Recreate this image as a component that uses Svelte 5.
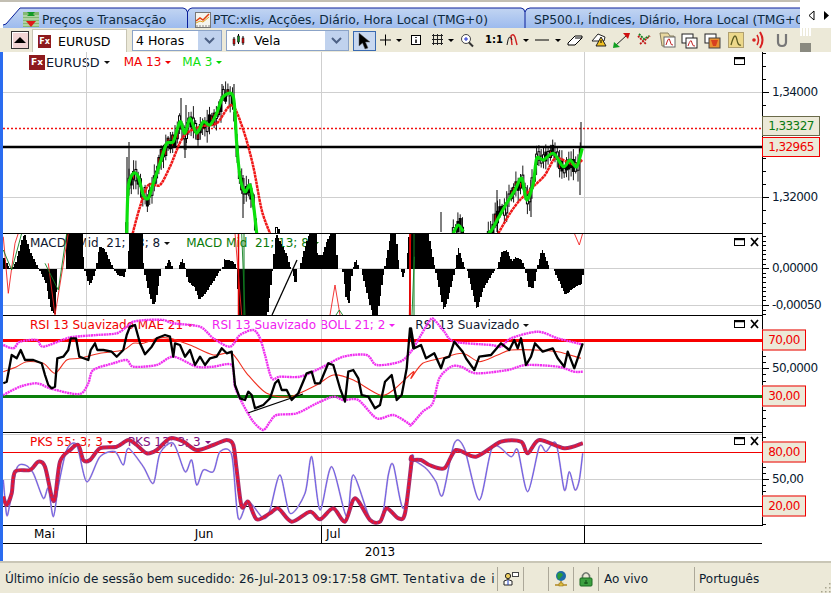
<script>
  const parse = (s, ox, oy) => s.trim().split(/\s+/).map(p => { const [a, b] = p.split(',').map(Number); return [a / 3 + ox, b / 3 + oy]; });
  const str = (a) => a.map(p => p[0].toFixed(1) + ',' + p[1].toFixed(1)).join(' ');
  const smooth = (a) => {
    let d = `M${a[0][0].toFixed(1)} ${a[0][1].toFixed(1)}`;
    for (let i = 0; i < a.length - 1; i++) {
      const p0 = a[Math.max(i - 1, 0)], p1 = a[i], p2 = a[i + 1], p3 = a[Math.min(i + 2, a.length - 1)];
      const k = 0.14;
      d += ` C${(p1[0] + (p2[0] - p0[0]) * k).toFixed(1)} ${(p1[1] + (p2[1] - p0[1]) * k).toFixed(1)} ${(p2[0] - (p3[0] - p1[0]) * k).toFixed(1)} ${(p2[1] - (p3[1] - p1[1]) * k).toFixed(1)} ${p2[0].toFixed(1)} ${p2[1].toFixed(1)}`;
    }
    return d;
  };
  const L = (s, t = 230) => parse(s, 0, t);
  const R = (s, t = 230) => parse(s, 411, t);

  const greenA = parse('380,490 385,350 400,310 415,320 430,375 445,385 460,340 480,280 500,220 520,215 540,155 555,190 570,145 590,190 610,155 630,165 650,130 670,80 700,80 710,220 720,320 735,365 750,345 760,400 770,490', 0, 70);
  const greenB = parse('100,400 115,375 130,395', 420, 100);
  const greenC = parse('205,400 215,390 240,345 260,310 285,270 305,235 320,300 340,250 350,175 370,180 400,160 430,200 450,180 470,200 487,145', 420, 100);
  const redA = parse('398,490 420,410 445,345 480,345 510,290 550,200 600,170 650,160 695,105 730,180 760,290 785,420 810,490', 0, 70);
  const redC = parse('235,400 270,340 300,300 340,260 375,225 405,175 440,185 465,195 487,180', 420, 100);

  let seed = 7;
  const rnd = () => { seed = (seed * 16807) % 2147483647; return seed / 2147483647; };
  const at = (line, x) => {
    if (x <= line[0][0]) return line[0][1];
    for (let i = 1; i < line.length; i++) if (x <= line[i][0]) {
      const [a, b] = line[i - 1], [c, d] = line[i];
      return b + (d - b) * (x - a) / Math.max(c - a, 0.01);
    }
    return line[line.length - 1][1];
  };
  const candles = [];
  for (const line of [greenA, greenB, greenC]) {
    for (let x = line[0][0]; x < line[line.length - 1][0]; x += 2.3) {
      const c = at(line, x) + (rnd() - 0.5) * 10, h = 4 + rnd() * 8;
      candles.push({ x, y: c - h / 2, h, up: h + 2 + rnd() * 10, dn: h + 2 + rnd() * 10, f: rnd() < 0.25 ? '#e01010' : rnd() < 0.5 ? '#000' : '#fff' });
    }
  }
  const spikes = [[127,157,235],[129,142,190],[181,98,130],[186,105,150],[234,84,100],[222,84,100],[243,175,218],[185,130,158],[581,122,150],[580,150,195],[531,180,217],[497,190,232],[441,212,232]];
  const spikeLines = spikes.map(s => ({ x: s[0], a: s[1], b: s[2] }));

  const macdPts = [...L('10,85 30,120 45,95 60,40 70,10 75,25 90,70 115,118 135,160 150,240 165,255 168,118 195,118 198,10 243,10 250,118 265,165 275,150 285,118 295,50 310,55 335,110 340,118 350,135 370,140 375,118 380,118 385,10 425,10 428,118 445,190 455,225 465,215 480,118 490,118 505,88 518,118 530,118 545,85 555,118 560,155 580,170 595,210 610,195 640,150 660,118 665,118 670,88 700,95 708,118 715,255 800,255 815,118 820,60 825,10 860,80 870,118 875,118 880,155 890,155 890,118 895,118 910,60 925,10 945,10 950,75 965,75 975,40 990,10 1005,10 1010,118 1025,118 1035,200 1045,220 1055,118 1065,85 1075,118 1080,118 1115,255 1130,255 1150,118 1170,10 1185,10 1195,118 1200,118 1205,145 1215,118 1225,10 1233,10'),
    ...R('50,10 70,118 95,240 105,220 130,118 138,50 160,118 165,118 195,240 215,175 245,125 250,118 255,118 270,65 285,60 300,95 310,80 330,90 340,118 350,170 365,175 375,118 390,55 415,118 425,118 460,195 480,178 510,160 515,118')];
  let macdD = '';
  for (let x = 3; x < 583; x += 1.5) {
    const y = at(macdPts, x);
    macdD += `M${x.toFixed(1)} 269V${y.toFixed(1)}H${(x + 1.5).toFixed(1)}V269Z `;
  }
  const macdRed = [
    L('10,20 25,190 45,40 55,10'), L('145,100 165,255 205,10'), L('705,10 725,255'), L('990,255 1005,165 1020,255'), L('1232,10 1228,255'),
    R('490,10 505,45 515,10')
  ];
  const macdGreen = [ L('10,60 35,120 65,10'), L('135,100 175,180 200,10'), L('725,10 735,255'), L('1008,255 1018,240 1028,255'), R('10,80 3,255') ];

  const rsiBlack = [...L('10,205 20,200 35,120 50,130 62,105 75,135 100,135 125,145 135,180 145,210 155,220 165,215 172,130 190,125 205,105 212,70 228,70 238,125 265,135 272,105 285,85 292,105 310,105 335,110 350,125 370,105 380,60 390,35 405,30 420,85 435,118 455,95 470,70 495,60 510,65 520,125 525,85 540,90 555,125 570,105 585,150 600,125 615,150 630,130 650,125 665,100 680,115 695,110 705,210 720,250 735,255 745,230 755,240 765,280 790,270 810,250 825,205 835,195 845,225 860,225 875,255 895,235 920,175 935,170 945,205 960,205 985,145 1000,150 1020,220 1035,260 1045,170 1060,165 1075,190 1085,240 1105,245 1125,280 1140,270 1155,200 1175,180 1190,255 1205,240 1220,160 1230,40 1240,100', 315), ...R('0,40 10,100 30,90 45,130 70,115 90,160 100,130 115,125 130,80 155,110 165,130 190,165 205,125 240,120 270,85 295,105 310,75 320,100 330,70 345,150 360,125 372,85 395,110 425,100 440,130 460,155 470,110 490,160 500,130 515,85', 315)];
  const rsiUp = [...L('10,90 40,100 60,80 110,75 130,95 200,70 225,65 290,60 350,55 380,35 400,20 440,15 490,15 520,25 600,35 640,70 690,95 720,60 760,45 780,70 795,120 815,190 840,185 900,185 960,160 1030,125 1100,120 1130,150 1200,140', 315), ...R('0,110 30,60 60,12 75,20 100,50 130,80 240,90 270,95 300,70 380,50 440,70 500,85 515,90', 315)];
  const rsiLow = [...L('10,240 60,215 110,205 150,220 210,235 245,235 265,205 280,165 340,145 380,135 400,155 470,150 520,125 590,155 640,155 695,150 705,215 730,270 760,320 790,345 810,320 830,300 890,295 950,265 1000,245 1030,255 1075,255 1130,310 1180,300 1225,325', 315), ...R('0,330 35,290 65,265 85,190 120,155 150,155 195,175 290,165 345,150 440,155 490,170 515,170', 315)];
  const rsiEma = [...L('10,170 50,155 80,140 130,145 165,175 200,135 240,130 300,115 370,105 400,85 430,85 470,70 510,70 570,90 640,120 695,115 740,175 800,235 870,245 950,210 1000,180 1060,195 1140,240 1180,225 1240,170', 315), ...R('0,190 35,145 90,130 155,115 205,140 260,120 300,105 370,105 440,110 510,130', 315)];

  const pksThick = [...L('10,200 20,225 35,190 45,125 90,120 115,95 135,110 155,200 165,205 180,95 210,60 235,45 250,90 270,90 300,55 350,50 385,30 410,45 440,70 470,60 510,25 550,35 590,60 640,45 680,30 700,45 710,120 725,230 745,215 770,268 810,250 835,235 875,275 930,245 960,268 1000,235 1035,275 1065,205 1110,270 1140,275 1160,235 1195,265 1215,250 1235,90', 430), ...R('0,90 30,90 55,105 100,115 135,60 195,80 270,35 330,35 350,70 385,30 460,55 515,40', 430)];
  const pksThin = [...L('10,150 20,255 30,220 50,115 75,105 100,130 130,205 145,175 160,260 175,170 200,60 230,45 260,155 300,80 345,65 370,105 385,55 430,110 460,160 480,70 520,40 555,125 575,90 590,165 610,120 640,125 660,65 695,75 715,265 745,215 790,265 810,240 840,135 870,250 915,190 935,80 960,240 995,110 1040,260 1060,135 1110,265 1145,265 1165,135 1180,105 1210,235 1240,85', 430), ...R('0,85 45,115 75,155 95,195 130,40 160,55 205,210 245,50 300,80 320,60 350,185 385,50 405,65 435,40 460,180 475,125 492,180 505,150 515,70', 430)];

  const range = (a, b, s) => { const o = []; for (let v = a; v < b; v += s) o.push(v); return o; };
  const grid = [86, 321, 584];
  const panes = [
    { t: 52, h: 181 }, { t: 234, h: 81 }, { t: 316, h: 116 }, { t: 433, h: 92 }
  ];
  const vb = (p) => `3 ${p.t} 759 ${p.h}`;
  const ticks = (p, list) => list.map(y => ({ y: y - p.t }));
  const t0 = ticks(panes[0], range(53, 233, 13.1));
  const t1 = ticks(panes[1], range(236, 315, 4.6));
  const t2 = ticks(panes[2], [356, 362, 374, 381, 410, 418, 426]);
  const t3 = ticks(panes[3], [437, 467, 473, 479, 485, 491, 524]);
  const top = (p, y) => `top:${y - p.t}px`;
</script>

<div class="app">
  <div class="tabs">
    <svg class="tabshape" viewBox="0 0 800 28" aria-hidden="true">
      <defs>
        <linearGradient id="tg" x1="0" y1="0" x2="0" y2="1"><stop offset="0" stop-color="#c2d5f2"/><stop offset="1" stop-color="#9dbbee"/></linearGradient>
      </defs>
      <path d="M3 25 L6 24 L20 8 H183 Q187 8 188 11 V28 H3 Z" fill="url(#tg)"/>
      <path d="M188 28 V11 Q189 8 192 8 H521 Q525 8 525 11 V28 Z" fill="url(#tg)"/>
      <path d="M525 28 V11 Q526 8 530 8 H800 V28 Z" fill="url(#tg)"/>
      <path d="M3 25 L6 24 L20 8 H183 Q186 8 187.500 12 V28 M187.500 12 Q189 8 192 8 H521 Q524 8 525 12 V28 M525 12 Q526 8 530 8 H800" fill="none" stroke="#0a1f9a" stroke-width="1"/>
    </svg>
    <div class="tab t1">
      <svg width="17" height="17" viewBox="0 0 17 17" aria-hidden="true"><rect x="0" y="1" width="16" height="15" fill="#84b874"/><path d="M0 5H16M0 8H16M0 11H16M0 14H16" stroke="#dcecd0"/><path d="M4 1 H12 L8 5Z M8 1 L12 5 H4Z" fill="#129a26"/><path d="M8 16 L13 10 H3Z" fill="#e01818"/></svg>
      <span>Preços e Transacção</span>
    </div>
    <div class="tab t2">
      <svg width="16" height="16" viewBox="0 0 16 16" aria-hidden="true"><rect x=".5" y=".5" width="15" height="15" fill="#f4f4ee" stroke="#777"/><path d="M1 9 L5 6 L8 8 L14 2" fill="none" stroke="#e04010" stroke-width="1.500"/><path d="M1 11 L5 9 L8 10 L14 5" fill="none" stroke="#e0a020"/><path d="M2 13V15M5 13V15M8 13V15M11 13V15M14 13V15" stroke="#888"/></svg>
      <span>PTC:xlis, Acções, Diário, Hora Local (TMG+0)</span>
    </div>
    <div class="tab t3">
      <svg width="16" height="16" viewBox="0 0 16 16" aria-hidden="true"><rect x=".5" y=".5" width="15" height="15" fill="#f4f4ee" stroke="#777"/><path d="M1 9 L5 6 L8 8 L14 2" fill="none" stroke="#e04010" stroke-width="1.500"/><path d="M1 11 L5 9 L8 10 L14 5" fill="none" stroke="#e0a020"/><path d="M2 13V15M5 13V15M8 13V15M11 13V15M14 13V15" stroke="#888"/></svg>
      <span>SP500.I, Índices, Diário, Hora Local (TMG+0)</span>
    </div>
    <div class="scroll">
      <svg width="31" height="28" viewBox="0 0 31 28" aria-hidden="true"><path d="M14 11 L9 15.500 L14 20Z" fill="none" stroke="#000"/><path d="M24 11 L29 15.500 L24 20Z" fill="#000"/></svg>
    </div>
  </div>

  <div class="toolbar">
    <button class="collapse" aria-label="recolher"><i></i></button>
    <div class="symtab"><span class="fx">Fx</span><span>EURUSD</span></div>
    <div class="combo c1"><span>4 Horas</span><b class="arrow"><svg width="11" height="7" viewBox="0 0 11 7" aria-hidden="true"><path d="M1 1 L5.500 5.500 L10 1" fill="none" stroke="#4d6185" stroke-width="2"/></svg></b></div>
    <div class="combo c2">
      <svg width="13" height="14" viewBox="0 0 13 14" aria-hidden="true"><path d="M2 3V12M6.500 0V10M11 2V11" stroke="#000"/><rect x="1" y="5" width="2" height="5" fill="#e01010" stroke="#000" stroke-width=".5"/><rect x="5.500" y="2" width="2" height="6" fill="#109020" stroke="#000" stroke-width=".5"/><rect x="10" y="4" width="2" height="5" fill="#e01010" stroke="#000" stroke-width=".5"/></svg>
      <span>Vela</span><b class="arrow"><svg width="11" height="7" viewBox="0 0 11 7" aria-hidden="true"><path d="M1 1 L5.500 5.500 L10 1" fill="none" stroke="#4d6185" stroke-width="2"/></svg></b>
    </div>
    <div class="tool sel"><svg width="16" height="18" viewBox="0 0 16 18" aria-hidden="true"><path d="M2 1 V14 L5.500 11 L8 17 L11 16 L8.500 10 H13 Z" fill="#000" stroke="#666" stroke-width=".5"/></svg></div>
    <svg class="tools" width="447" height="24" viewBox="377 28 447 24" aria-hidden="true">
      <path d="M380 40H391M385.500 34.500V45.500" stroke="#000"/>
      <path d="M396 39H402L399 42Z" fill="#000"/>
      <rect x="411.500" y="35.500" width="9" height="9" fill="#fff" stroke="#000"/><path d="M416 37V38M416 39.500V43" stroke="#000" stroke-width="1.500"/>
      <path d="M432 35.500H443M432 39.500H443M432 43.500H443M433.500 34V45M437.500 34V45M441.500 34V45" stroke="#222"/>
      <path d="M448 39H454L451 42Z" fill="#000"/>
      <circle cx="466" cy="39" r="4.500" fill="#fff" stroke="#444"/><path d="M469 42.500L473 46.500" stroke="#333" stroke-width="2"/><path d="M464 39H468M466 37V41" stroke="#2030d0"/>
      <path d="M512 45 L511 36 Q513 33 515 37 L517 45" fill="none" stroke="#d02020" stroke-width="1.400"/><path d="M507 45 Q509 32 512 40" fill="none" stroke="#202020"/>
      <path d="M523 39H529L526 42Z" fill="#000"/>
      <path d="M535 40H549" stroke="#000"/>
      <path d="M555 39H561L558 42Z" fill="#000"/>
      <path d="M568 43 L575 36 H582 V38 L575 45 H568 Z M575 38 H582" fill="#fff" stroke="#000"/>
      <path d="M592 41 L598 34 L605 37 L604 41Z" fill="#fff" stroke="#222"/><path d="M601 37 L606 46 H596Z" fill="#f0c020" stroke="#222"/><path d="M601 40V43" stroke="#000"/>
      <path d="M615 46 L627 35" stroke="#222"/><path d="M614 42 L620 47 L613 48Z" fill="#10a020"/><path d="M623 33 L630 33 L628 39Z" fill="#d01010"/>
      <path d="M638 36 L646 44 M640 44 L650 36" stroke="#c01818" stroke-width="1.800" stroke-dasharray="2 1"/><path d="M639 34 L644 39 L649 36" stroke="#108020" stroke-width="1.800" fill="none" stroke-dasharray="2 1"/>
      <path d="M660 33 H668 L670 36 H674 V46 H662 Z" fill="#e8d8a0" stroke="#8a8060"/><rect x="664" y="37" width="11" height="10" fill="#fff" stroke="#666"/><path d="M666 45 Q669 35 670 41 Q671 46 673 45" fill="none" stroke="#c02020"/>
      <rect x="682" y="34" width="11" height="9" fill="#fff" stroke="#222"/><rect x="686" y="38" width="11" height="10" fill="#fff" stroke="#222"/><path d="M688 46 Q691 37 692 43 Q693 47 695 46" fill="none" stroke="#c02020"/>
      <rect x="705" y="34" width="11" height="9" fill="#fff" stroke="#222"/><rect x="709" y="38" width="11" height="10" fill="#e89030" stroke="#444"/><path d="M711 40 H718 L716 46 H713Z" fill="#d84020"/>
      <rect x="728.500" y="32.500" width="15" height="15" fill="#ecd88a" stroke="#b0a070"/><path d="M731 45 Q735 30 737 40 Q738 46 741 45" fill="none" stroke="#5a5a20" stroke-width="1.300"/>
      <circle cx="754" cy="40" r="1.800" fill="#d82020"/><path d="M757 35 Q760 40 757 45" fill="none" stroke="#d82020" stroke-width="1.500"/><path d="M760 32 Q765 40 760 48" fill="none" stroke="#d82020" stroke-width="2"/>
      <path d="M778 34 V42 Q778 46 782 46 Q786 46 786 42 V34" fill="none" stroke="#777" stroke-width="2.200"/>
    </svg>
    <span class="one">1:1</span>
    <div class="chev" aria-hidden="true"></div>
  </div>

  <div class="chart">
    <div class="pane" style="height:181px">
      <div class="plot">
        <div class="legend l-main"><span class="fx big">Fx</span><span class="k wide">EURUSD</span><u></u><span class="r g1">MA 13</span><u class="ur"></u><span class="l g2">MA 3</span><u class="ul"></u></div>
        <svg viewBox={vb(panes[0])} aria-hidden="true">
          <path d="M3 92.500H762M3 197.500H762" stroke="#cfcfcf"/>
          {#each grid as x}<path d={`M${x + .5} 52V233`} stroke="#cfcfcf"/>{/each}
          <path d="M3 128.500H762" stroke="#f01010" stroke-width="1.500" stroke-dasharray="2 2"/>
          <path d="M3 147H762" stroke="#000" stroke-width="2.500"/>
          {#each spikeLines as s}<path d={`M${s.x} ${s.a}V${s.b}`} stroke="#000"/>{/each}
          {#each candles as c}
            <path d={`M${c.x.toFixed(1)} ${(c.y - (c.up - c.h)).toFixed(1)}V${(c.y + c.dn).toFixed(1)}`} stroke="#000" stroke-width=".9"/>
            <rect x={c.x - 1} y={c.y} width="2" height={c.h} fill={c.f} stroke="#000" stroke-width="1"/>
          {/each}
          <rect x="275.500" y="227.500" width="2" height="6" fill="#fff" stroke="#000"/><rect x="278" y="229" width="2" height="5" fill="#000"/>
          <path d={smooth(redA)} class="ln" stroke="#f01818" stroke-width="2.500" stroke-dasharray="3 .5"/>
          <path d={smooth(redC)} class="ln" stroke="#f01818" stroke-width="2.500" stroke-dasharray="3 .5"/>
          <path d={smooth(greenA)} class="ln" stroke="#0ce00c" stroke-width="3.200"/>
          <path d={smooth(greenB)} class="ln" stroke="#0ce00c" stroke-width="3.200"/>
          <path d={smooth(greenC)} class="ln" stroke="#0ce00c" stroke-width="3.200"/>
          <rect x="734.500" y="57.500" width="10" height="7" class="win"/><path d="M735 58.500H744" stroke="#000" stroke-width="1.500"/>
        </svg>
      </div>
      <div class="axis">
        {#each t0 as t}<i class="tick" style={`top:${t.y}px`}></i>{/each}
        <i class="tick long" style={top(panes[0], 92)}></i><i class="tick long" style={top(panes[0], 197)}></i>
        <span class="val" style={top(panes[0], 92)}>1,34000</span>
        <span class="val" style={top(panes[0], 197)}>1,32000</span>
        <span class="box gbox" style={top(panes[0], 127)}>1,33327</span>
        <span class="box rbox" style={top(panes[0], 147)}>1,32965</span>
      </div>
    </div>

    <div class="pane" style="height:81px">
      <div class="plot">
        <div class="legend l-macd"><span class="k">MACD &nbsp;&nbsp;Mid&nbsp; 21; 13; 8</span><u></u><span class="dg g3">MACD Mid&nbsp; 21; 13; 8</span><u class="ug"></u></div>
        <svg viewBox={vb(panes[1])} aria-hidden="true">
          <path d="M3 268.500H762M3 305.500H762" stroke="#cfcfcf"/>
          {#each grid as x}<path d={`M${x + .5} 234V315`} stroke="#cfcfcf"/>{/each}
          <path d={macdD} fill="#000" shape-rendering="crispEdges"/>
          {#each macdRed as l}<polyline points={str(l)} class="ln" stroke="#f02020" stroke-width=".9"/>{/each}
          {#each macdGreen as l}<polyline points={str(l)} class="ln" stroke="#108020" stroke-width=".9"/>{/each}
          <path d="M238.500 234V315" stroke="#e00000" stroke-width="1.500"/><path d="M244 234V315" stroke="#108020"/>
          <path d="M410 234V315" stroke="#e00000" stroke-width="1.800"/><path d="M414 234V315" stroke="#108020"/>
          <path d="M272 315 L297 260" stroke="#000" stroke-width="1.300"/>
          <rect x="734.500" y="238.500" width="10" height="7" class="win"/><path d="M735 239.500H744" stroke="#000" stroke-width="1.500"/>
          <path d="M751 238 L758 246 M758 238 L751 246" stroke="#000" stroke-width="1.800"/>
        </svg>
      </div>
      <div class="axis">
        {#each t1 as t}<i class="tick" style={`top:${t.y}px`}></i>{/each}
        <i class="tick long" style={top(panes[1], 268)}></i><i class="tick long" style={top(panes[1], 305)}></i>
        <span class="val" style={top(panes[1], 268)}>0,00000</span>
        <span class="val" style={top(panes[1], 305)}>-0,00050</span>
      </div>
    </div>

    <div class="pane" style="height:116px">
      <div class="plot">
        <div class="legend l-rsi"><span class="r">RSI 13 Suavizado MAE 21</span><u class="ur"></u><span class="m g4">RSI 13 Suavizado BOLL 21; 2</span><u class="um"></u><span class="k g5">RSI 13 Suavizado</span><u></u></div>
        <svg viewBox={vb(panes[2])} aria-hidden="true">
          <path d="M3 368.500H762" stroke="#cfcfcf"/>
          {#each grid as x}<path d={`M${x + .5} 316V432`} stroke="#cfcfcf"/>{/each}
          <path d="M3 340.500H762" stroke="#f80000" stroke-width="3"/>
          <path d="M3 396.500H762" stroke="#0a800a" stroke-width="3"/>
          <path d={smooth(rsiUp)} class="ln" stroke="#f030f0" stroke-width="2.400" stroke-dasharray="2 .6"/>
          <path d={smooth(rsiLow)} class="ln" stroke="#f030f0" stroke-width="2.400" stroke-dasharray="2 .6"/>
          <path d={smooth(rsiEma)} class="ln" stroke="#f03020" stroke-width="1.100"/>
          <polyline points={str(rsiBlack)} class="ln" stroke="#000" stroke-width="2.300"/>
          <path d="M248 413 L303 394" stroke="#000" stroke-width="1.200"/>
          <rect x="734.500" y="320.500" width="10" height="7" class="win"/><path d="M735 321.500H744" stroke="#000" stroke-width="1.500"/>
          <path d="M751 320 L758 328 M758 320 L751 328" stroke="#000" stroke-width="1.800"/>
        </svg>
      </div>
      <div class="axis">
        {#each t2 as t}<i class="tick" style={`top:${t.y}px`}></i>{/each}
        <i class="tick long" style={top(panes[2], 368)}></i>
        <span class="box rbox sm" style={top(panes[2], 340)}>70,00</span>
        <span class="val" style={top(panes[2], 368)}>50,0000</span>
        <span class="box rbox sm" style={top(panes[2], 396)}>30,00</span>
      </div>
    </div>

    <div class="pane" style="height:92px">
      <div class="plot">
        <div class="legend l-pks"><span class="r">PKS 55; 3; 3</span><u class="ur"></u><span class="p g6">PKS 13; 3; 3</span><u class="up"></u></div>
        <svg viewBox={vb(panes[3])} aria-hidden="true">
          <path d="M3 479.500H762M3 434.500H762" stroke="#cfcfcf"/>
          {#each grid as x}<path d={`M${x + .5} 433V525`} stroke="#cfcfcf"/>{/each}
          <path d="M3 452.500H762" stroke="#f00000"/>
          <path d="M3 506.500H762" stroke="#000"/>
          <path d={smooth(pksThin)} class="ln" stroke="#c8a8d4" stroke-width="1.800"/>
          <path d={smooth(pksThin)} class="ln" stroke="#4a4af0" stroke-width=".8"/>
          <path d={smooth(pksThick)} class="ln" stroke="#a03070" stroke-width="4"/>
          <path d={smooth(pksThick)} class="ln" stroke="#ee1030" stroke-width="2.200" stroke-dasharray="3 1"/>
          <rect x="734.500" y="437.500" width="10" height="7" class="win"/><path d="M735 438.500H744" stroke="#000" stroke-width="1.500"/>
          <path d="M751 437 L758 445 M758 437 L751 445" stroke="#000" stroke-width="1.800"/>
        </svg>
      </div>
      <div class="axis">
        {#each t3 as t}<i class="tick" style={`top:${t.y}px`}></i>{/each}
        <i class="tick long" style={top(panes[3], 479)}></i>
        <span class="box rbox sm" style={top(panes[3], 452)}>80,00</span>
        <span class="val" style={top(panes[3], 479)}>50,00</span>
        <span class="box rbox sm" style={top(panes[3], 506)}>20,00</span>
      </div>
    </div>

    <div class="dates">
      <div class="months">
        <span class="m1">Mai</span><span class="m2">Jun</span><span class="m3">Jul</span><span class="m4"></span>
      </div>
      <div class="year">2013</div>
    </div>
  </div>

  <div class="status">
    <div class="st msg">Último início de sessão bem sucedido: 26-Jul-2013 09:17:58 GMT. <span class="tail">Tentativa de i</span></div>
    <div class="st ic w1"><svg width="16" height="14" viewBox="0 0 16 14" aria-hidden="true"><circle cx="5" cy="4" r="2.600" fill="#f0d060" stroke="#222"/><path d="M1 13V9 Q5 6 9 9 V13Z" fill="#fff" stroke="#222"/><path d="M5 8V13" stroke="#2040c0"/><rect x="9.500" y=".5" width="6" height="4" fill="#fff" stroke="#444"/></svg></div>
    <div class="st w2"></div>
    <div class="st ic w3"><svg width="14" height="16" viewBox="0 0 14 16" aria-hidden="true"><circle cx="7" cy="5" r="5" fill="#1e6aa8"/><path d="M4 2 Q8 1 9 4 Q6 7 5 9 Q2 6 4 2Z" fill="#2a9a3a"/><path d="M7 10V13M1 14H13" stroke="#b08820" stroke-width="1.500"/><rect x="5" y="12" width="4" height="3" fill="#e0c040" stroke="#8a6810" stroke-width=".5"/></svg></div>
    <div class="st ic w3"><svg width="14" height="16" viewBox="0 0 14 16" aria-hidden="true"><path d="M3.500 7V4.500 Q7 -1 10.500 4.500 V7" fill="none" stroke="#707870" stroke-width="1.600"/><rect x="1" y="7" width="12" height="8" rx="1" fill="#3ca040" stroke="#1a6a20"/><path d="M7 9V13M5 12H9" stroke="#0f4a14"/></svg></div>
    <div class="st w4">Ao vivo</div>
    <div class="st w5">Português</div>
    <svg class="grip" width="11" height="11" viewBox="0 0 11 11" aria-hidden="true"><path d="M9 1h1.500v1.500H9zM5 5h1.500v1.500H5zM9 5h1.500v1.500H9zM1 9h1.500v1.500H1zM5 9h1.500v1.500H5zM9 9h1.500v1.500H9z" fill="#a8a590"/></svg>
  </div>
</div>

<style>
  :global(body) { margin: 0; background: #fff; }
  .app { width: 831px; height: 593px; overflow: hidden; font-family: "DejaVu Sans", sans-serif; font-size: 12px; color: #000; display: flex; flex-direction: column; position: relative; }
  .tabs { height: 28px; flex: none; position: relative; display: flex; box-sizing: border-box; border-top: 2px solid #c3bfb3; }
  .tabshape { position: absolute; left: 0; top: -2px; width: 800px; height: 28px; }
  .tab { position: relative; display: flex; align-items: center; gap: 2px; height: 17px; margin-top: 9px; white-space: nowrap; overflow: hidden; color: #0d2a3e; font-size: 12.300px; }
  .t1 { margin-left: 23px; width: 165px; }
  .t2 { margin-left: 7px; width: 330px; }
  .t3 { margin-left: 7px; width: 268px; gap: 2px; }
  .scroll { position: absolute; left: 800px; top: -2px; width: 31px; height: 28px; background: #fff; }
  .toolbar { height: 24px; flex: none; background: #ece9d8; position: relative; display: flex; align-items: flex-start; padding-left: 3px; box-sizing: border-box; border-left: 0; }
  .collapse { width: 18px; height: 18px; margin: 3px 0 0 8px; padding: 0; background: #f0d4d4; border: 1px solid #333; box-shadow: inset 1px 1px 0 #fff; display: flex; align-items: center; justify-content: center; }
  .collapse i { display: block; border: 6px solid transparent; border-top: 0; border-bottom: 6px solid #000; }
  .symtab { margin: 1px 0 0 3px; width: 95px; height: 23px; box-sizing: border-box; background: #fff; border: 1px solid #c8c5b4; border-bottom: 0; display: flex; align-items: center; gap: 7px; padding-left: 5px; font-size: 12.500px; }
  .fx { display: inline-block; width: 13px; height: 13px; background: #8e1a1e; color: #fff; font: bold 8px/13px "DejaVu Sans", sans-serif; text-align: center; flex: none; }
  .fx.big { width: 16px; height: 15px; line-height: 15px; font-size: 9px; margin-right: 1px; }
  .combo { margin-top: 2px; height: 21px; box-sizing: border-box; background: #fff; border: 1px solid #8ba3c7; display: flex; align-items: center; position: relative; font-size: 12.500px; }
  .c1 { margin-left: 5px; width: 90px; padding-left: 3px; }
  .c2 { margin-left: 4px; width: 123px; padding-left: 5px; gap: 9px; }
  .arrow { position: absolute; right: 0; top: 0; width: 23px; height: 19px; background: #c0d2ee; display: flex; align-items: center; justify-content: center; }
  .tool.sel { margin: 3px 0 0 4px; width: 23px; height: 20px; box-sizing: border-box; border: 1px solid #3a6ab0; background: #c8d8f0; display: flex; align-items: center; justify-content: center; }
  .tools { flex: none; margin-left: 1px; }
  .one { position: absolute; left: 485px; top: 5px; font: bold 10px/14px "DejaVu Sans", sans-serif; }
  .chev { position: absolute; left: 800px; top: 0; width: 11px; height: 24px; }
  .chev::before { content: ""; position: absolute; left: 0; right: 0; top: 0; height: 8px; background: repeating-linear-gradient(90deg, #fff 0 2px, #ece9d8 2px 3px); }
  .chev::after { content: ""; position: absolute; left: 0; right: 0; bottom: 0; height: 9px; background: #8a8a80; }
  .chart { flex: none; height: 509px; border-left: 3px solid #2a6cf0; box-sizing: border-box; background: #fff; }
  .pane { display: flex; box-sizing: content-box; border-bottom: 1px solid #000; width: 828px; }
  .plot { width: 759px; flex: none; height: 100%; position: relative; overflow: hidden; }
  .plot svg { position: absolute; left: 0; top: 0; width: 759px; height: 100%; display: block; }
  .ln { fill: none; stroke-linejoin: round; }
  .win { fill: #fff; stroke: #000; }
  .axis { width: 68px; flex: none; position: relative; border-left: 1px solid #000; margin-bottom: -1px; background: #fff; z-index: 1; }
  .tick { position: absolute; left: 0; width: 3px; height: 1px; background: #000; }
  .tick.long { width: 6px; }
  .val { position: absolute; left: 9px; transform: translateY(-50%); line-height: 14px; color: #0a1a30; white-space: nowrap; letter-spacing: -.6px; }
  .box { position: absolute; left: -1px; transform: translateY(-50%); width: 58px; height: 20px; line-height: 18px; box-sizing: border-box; background: #ece9d8; text-align: center; white-space: nowrap; letter-spacing: -.6px; }
  .box.sm { width: 44px; height: 21px; }
  .gbox { border: 1px solid #6a6a4a; color: #0a7a12; transform: translateY(-55%); }
  .rbox { border: 1px solid #f00000; color: #f00000; }
  .legend { position: absolute; display: flex; align-items: center; left: 27px; height: 15px; line-height: 15px; white-space: nowrap; }
  .l-main { top: 3px; left: 26px; }
  .l-macd { top: 2px; }
  .l-rsi { top: 2px; }
  .l-pks { top: 2px; }
  .legend u { display: inline-block; border: 3px solid transparent; border-top: 3px solid #111; border-bottom: 0; margin-left: 4px; text-decoration: none; }
  .legend u.ur { border-top-color: #f00000; }
  .legend u.ul { border-top-color: #00d800; }
  .legend u.um { border-top-color: #f020f0; }
  .legend u.ug { border-top-color: #0a7a0a; }
  .legend u.up { border-top-color: #801080; }
  .k { color: #101830; }
  .wide { font-size: 12.800px; }
  .r { color: #f00000; }
  .l { color: #10e010; }
  .m { color: #f020f0; }
  .dg { color: #0a7a0a; }
  .p { color: #801080; }
  .g1 { margin-left: 14px; }
  .g2 { margin-left: 11px; }
  .g3 { margin-left: 16px; }
  .g4 { margin-left: 19px; }
  .g5 { margin-left: 20px; }
  .g6 { margin-left: 15px; }
  .dates { width: 759px; }
  .months { display: flex; height: 17px; border-bottom: 1px solid #000; line-height: 17px; }
  .months span { box-sizing: border-box; flex: none; }
  .m1 { width: 84px; border-right: 1px solid #000; text-align: center; }
  .m2 { width: 235px; border-right: 1px solid #000; text-align: center; }
  .m3 { width: 263px; border-right: 1px solid #000; padding-left: 4px; }
  .m4 { width: 177px; }
  .year { height: 17px; line-height: 17px; text-align: center; width: 754px; }
  .status { flex: 1; background: #ece9d8; border-top: 2px solid #c9c6b6; display: flex; align-items: center; position: relative; color: #0c1c30; box-sizing: border-box; }
  .st { height: 24px; line-height: 24px; box-sizing: border-box; border-right: 1px solid #aca899; white-space: nowrap; overflow: hidden; flex: none; margin-top: 2px; }
  .msg { width: 498px; padding-left: 5px; }
  .tail { letter-spacing: .8px; }
  .ic { display: flex; align-items: center; justify-content: center; }
  .w1 { width: 26px; }
  .w2 { width: 25px; }
  .w3 { width: 25px; }
  .w4 { width: 96px; padding-left: 5px; }
  .w5 { width: 133px; padding-left: 4px; border-right: 0; }
  .grip { position: absolute; right: 0; bottom: 0; }
</style>
